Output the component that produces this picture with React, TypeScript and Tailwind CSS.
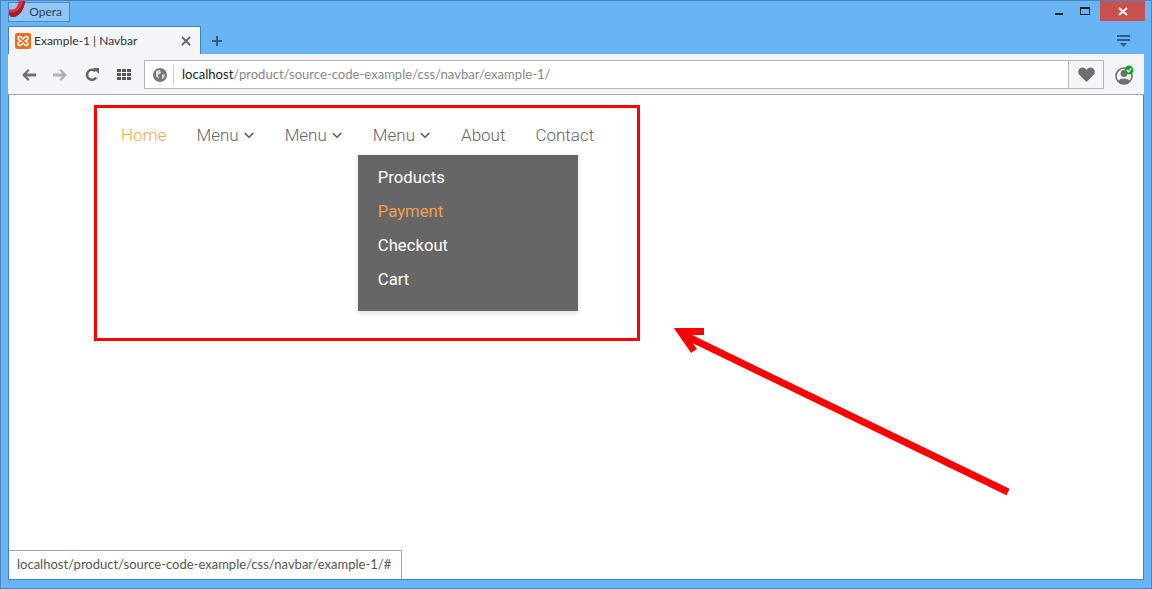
const navItems = [
  { label: "Home", active: true },
  { label: "Menu", caret: true },
  { label: "Menu", caret: true },
  { label: "Menu", caret: true, open: true },
  { label: "About" },
  { label: "Contact" },
];

const dropdownItems = ["Products", "Payment", "Checkout", "Cart"];

function Caret() {
  return (
    <svg width="10" height="7" viewBox="0 0 10 7" className="ml-[5px] mr-[1px] mt-[1px]" fill="none" stroke="#555" strokeWidth="1.3">
      <path d="M0.7 1 L5 5.3 L9.3 1" />
    </svg>
  );
}

function TitleBar() {
  return (
    <div className="flex h-[25px] shrink-0 items-start">
      <div className="relative mt-[1px] flex h-[20px] w-[62px] items-center justify-end border border-[#4b8cc4] bg-[#8fc6f6] pr-[7px] text-[12px] text-[#2c3e50]">
        <svg width="18" height="17" viewBox="0 0 18 17" className="absolute -left-px -top-[3px]">
          <path d="M1 9 C6 11 10 8 11 0 L17 0 C17 9 11 17 5 17 C3 17 1 16 1 14 Z" fill="#e8303c" />
          <path d="M1 12 C8 14 14 9 15 0 L17 0 C17 9 11 17 5 17 C3 17 1 16 1 14 Z" fill="#a51c2c" />
        </svg>
        Opera
      </div>
      <div className="-mr-px ml-auto flex h-[21px] items-start">
        <div className="flex h-[21px] w-[26px] items-center justify-center">
          <div className="mt-[5px] h-[2px] w-[8px] bg-[#222]" />
        </div>
        <div className="flex h-[20px] w-[25px] items-center justify-center">
          <div className="h-[8px] w-[10px] border border-t-2 border-[#222]" />
        </div>
        <div className="ml-[3px] flex h-[20px] w-[45px] items-center justify-center bg-[#c75050]">
          <svg width="10" height="9" viewBox="0 0 10 9" stroke="white" strokeWidth="2" fill="none">
            <path d="M1 1 L9 8 M9 1 L1 8" />
          </svg>
        </div>
      </div>
    </div>
  );
}

function TabRow() {
  return (
    <div className="flex h-[28px] shrink-0 items-stretch">
      <div className="flex w-[193px] items-center border border-b-0 border-[#4481b5] bg-[#f4f5f8] pl-[6px] pr-[9px] pt-[1px] text-[12px] text-[#333]">
        <svg width="16" height="16" viewBox="0 0 16 16" className="shrink-0">
          <rect width="16" height="16" rx="2" fill="#ed6d21" />
          <path d="M3 5 C3 3 6 3 7 5 L8 6 L9 5 C10 3 13 3 13 5 C13 6.5 11.5 7.5 10.5 8 C11.5 8.5 13 9.5 13 11 C13 13 10 13 9 11 L8 10 L7 11 C6 13 3 13 3 11 C3 9.5 4.5 8.5 5.5 8 C4.5 7.5 3 6.5 3 5 Z" fill="none" stroke="#fff" strokeWidth="1.5" />
        </svg>
        <span className="ml-[3px]">Example-1 | Navbar</span>
        <svg width="10" height="10" viewBox="0 0 10 10" className="ml-auto" stroke="#666" strokeWidth="1.8" fill="none">
          <path d="M1 1 L9 9 M9 1 L1 9" />
        </svg>
      </div>
      <svg width="12" height="12" viewBox="0 0 12 12" className="ml-[10px] mt-[9px]" stroke="#2f5d85" strokeWidth="2" fill="none">
        <path d="M6 1 V11 M1 6 H11" />
      </svg>
      <svg width="14" height="14" viewBox="0 0 14 14" className="ml-auto mr-[13px] mt-[8px]" fill="#2f5d85">
        <rect x="0" y="1" width="13" height="2" />
        <rect x="0" y="5" width="13" height="2" />
        <path d="M3 9 H10 L6.5 13 Z" />
      </svg>
    </div>
  );
}

function Toolbar() {
  return (
    <div className="flex h-[41px] shrink-0 items-center border-b border-[#a8a8a8] bg-[#f4f5f8] pt-[1px]">
      <svg width="14" height="12" viewBox="0 0 14 12" className="ml-[14px] shrink-0" fill="#6f7378">
        <path d="M6 0 L7.6 1.6 L4.8 4.5 H14 V7.5 H4.8 L7.6 10.4 L6 12 L0 6 Z" />
      </svg>
      <svg width="14" height="12" viewBox="0 0 14 12" className="ml-[17px] shrink-0" fill="#b0b2b5">
        <path d="M8 0 L6.4 1.6 L9.2 4.5 H0 V7.5 H9.2 L6.4 10.4 L8 12 L14 6 Z" />
      </svg>
      <svg width="14" height="14" viewBox="0 0 14 14" className="ml-[18px] shrink-0" fill="none">
        <path d="M11.2 9.5 A5 5 0 1 1 10.5 3.2" stroke="#666" strokeWidth="2.6" />
        <path d="M8 0 H14 V6 Z" fill="#666" />
      </svg>
      <div className="ml-[18px] grid shrink-0 grid-cols-3 gap-[1px]">
        {Array.from({ length: 9 }).map((_, i) => (
          <div key={i} className="h-[3px] w-[4px] bg-[#555]" />
        ))}
      </div>
      <div className="ml-[13px] flex h-[29px] w-[960px] shrink-0 items-center border border-[#b5b5b5] bg-white">
        <svg width="14" height="14" viewBox="0 0 14 14" className="ml-[8px] shrink-0">
          <circle cx="7" cy="7" r="7" fill="#777" />
          <path d="M3 3 L7 2 L8 5 L5 7 L6 11 L3 8 Z M9 7 L12 6 L11 10 L9 11 Z" fill="#ddd" />
        </svg>
        <div className="ml-[6px] h-[20px] w-px bg-[#ccc]" />
        <div className="ml-[8px] whitespace-nowrap text-[13.07px] text-[#888]">
          <span className="text-[#222]">localhost</span>/product/source-code-example/css/navbar/example-1/
        </div>
        <div className="ml-auto flex h-full w-[35px] items-center justify-center border-l border-[#b5b5b5] bg-[#f4f5f8]">
          <svg width="17" height="15" viewBox="0 0 17 15" fill="#6f6f6f">
            <path d="M8.5 15 L1 7.5 C-1 4.5 1 0.5 4.5 0.5 C6.5 0.5 7.8 1.5 8.5 3 C9.2 1.5 10.5 0.5 12.5 0.5 C16 0.5 18 4.5 16 7.5 Z" />
          </svg>
        </div>
      </div>
      <svg width="20" height="20" viewBox="0 0 20 20" className="ml-[10px] shrink-0">
        <circle cx="10" cy="11" r="8" fill="none" stroke="#6f6f6f" strokeWidth="1.6" />
        <circle cx="10" cy="8.5" r="3.4" fill="#6f6f6f" />
        <path d="M4 16.5 C5 12.5 15 12.5 16 16.5 C13 19.5 7 19.5 4 16.5 Z" fill="#6f6f6f" />
        <circle cx="15" cy="5" r="4.4" fill="#12a51c" />
        <path d="M12.8 5 L14.5 6.7 L17.3 3.5" fill="none" stroke="#fff" strokeWidth="1.4" />
      </svg>
    </div>
  );
}

function Navbar() {
  return (
    <nav className="ml-[97px] mt-[24px] flex items-start font-['Roboto',sans-serif] text-[17px] font-light leading-[32px] text-[#666]">
      {navItems.map((item, i) => (
        <div key={i} className="relative flex items-center px-[15px]">
          <span className={item.active ? "text-[#f9a64a]" : ""}>{item.label}</span>
          {item.caret && <Caret />}
          {item.open && (
            <div className="absolute left-0 top-[36px] h-[156px] w-[220px] bg-[#666] pt-[6px] text-[16.7px] font-normal leading-[34px] text-white shadow-[0_2px_5px_rgba(0,0,0,0.15)]">
              {dropdownItems.map((d) => (
                <div key={d} className={d === "Payment" ? "pl-[20px] text-[#f0a050]" : "pl-[20px]"}>
                  {d}
                </div>
              ))}
            </div>
          )}
        </div>
      ))}
    </nav>
  );
}

export default function App() {
  return (
    <div className="relative flex h-[589px] w-[1152px] flex-col overflow-hidden border border-[#4a86ba] bg-[#69b4f5] px-[7px] pb-[8px] font-['Lato',sans-serif]">
      <TitleBar />
      <TabRow />
      <Toolbar />
      <div className="relative min-h-0 flex-1 border-x border-b border-[#4481b5] bg-white">
        <Navbar />
        {/* red annotation box and arrow drawn over the page */}
        <div className="absolute left-[85px] top-[10px] h-[236px] w-[546px] border-[3px] border-[#ff0000]" />
        <svg width="360" height="190" viewBox="0 0 360 190" className="absolute left-[660px] top-[226px]" fill="none" stroke="#ff0000" strokeWidth="7">
          <path d="M339 171 L15 14" />
          <path d="M35 10.5 L11.5 10.5 L25 30" />
        </svg>
        <div className="absolute bottom-0 left-0 flex h-[29px] w-[393px] items-center border-r border-t border-[#a8a8a8] bg-white pl-[8px] text-[13px] text-[#555]">
          localhost/product/source-code-example/css/navbar/example-1/#
        </div>
      </div>
    </div>
  );
}
